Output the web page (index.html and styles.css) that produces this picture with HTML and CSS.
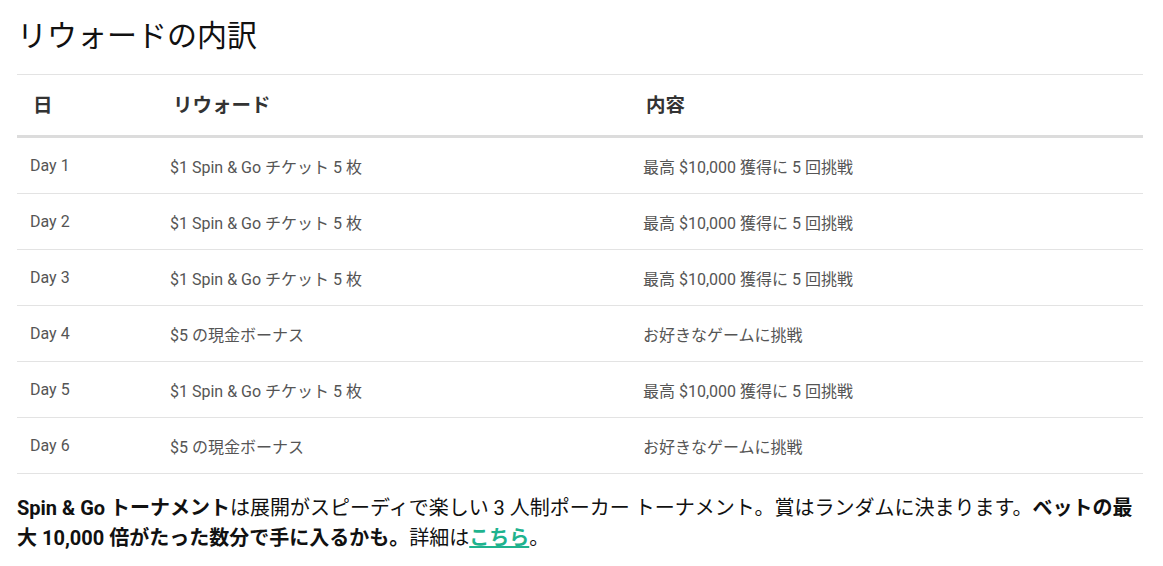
FILE: index.html
```html
<!DOCTYPE html>
<html lang="ja">
<head>
<meta charset="utf-8">
<title>リウォードの内訳</title>
<link rel="stylesheet" href="styles.css">
</head>
<body>
<main class="page">
  <h2 class="title">リウォードの内訳</h2>
  <table class="rewards">
    <colgroup>
      <col class="c-day">
      <col class="c-reward">
      <col class="c-detail">
    </colgroup>
    <thead>
      <tr><th>日</th><th>リウォード</th><th>内容</th></tr>
    </thead>
    <tbody>
      <tr><td>Day 1</td><td>$1 Spin &amp; Go チケット 5 枚</td><td>最高 $10,000 獲得に 5 回挑戦</td></tr>
      <tr><td>Day 2</td><td>$1 Spin &amp; Go チケット 5 枚</td><td>最高 $10,000 獲得に 5 回挑戦</td></tr>
      <tr><td>Day 3</td><td>$1 Spin &amp; Go チケット 5 枚</td><td>最高 $10,000 獲得に 5 回挑戦</td></tr>
      <tr><td>Day 4</td><td>$5 の現金ボーナス</td><td>お好きなゲームに挑戦</td></tr>
      <tr><td>Day 5</td><td>$1 Spin &amp; Go チケット 5 枚</td><td>最高 $10,000 獲得に 5 回挑戦</td></tr>
      <tr><td>Day 6</td><td>$5 の現金ボーナス</td><td>お好きなゲームに挑戦</td></tr>
    </tbody>
  </table>
  <p class="note"><strong>Spin &amp; Go トーナメント</strong>は展開がスピーディで楽しい 3 人制ポーカー トーナメント。賞はランダムに決まります。<strong>ベットの最大 10,000 倍がたった数分で手に入るかも。</strong>詳細は<a href="#" class="link">こちら</a>。</p>
</main>
</body>
</html>
```

FILE: styles.css
```css
html, body {
  margin: 0;
  padding: 0;
  background: #fff;
}
body {
  font-family: "Roboto", "Noto Sans CJK JP", sans-serif;
  color: #222;
}
.page {
  padding: 0 20px 0 17px;
}
.title {
  margin: 0;
  padding-top: 16px;
  height: 74px;
  box-sizing: border-box;
  font-size: 30px;
  line-height: 40px;
  font-weight: 400;
  color: #111;
}
.rewards {
  width: 1126px;
  border-collapse: collapse;
  table-layout: fixed;
}
.c-day { width: 140px; }
.c-reward { width: 473px; }
.c-detail { width: 513px; }
.rewards thead tr {
  border-top: 1px solid #e3e3e3;
  border-bottom: 3px solid #dcdcdc;
}
.rewards th {
  text-align: left;
  height: 62px;
  padding: 0 16px 4px;
  box-sizing: border-box;
  font-size: 19.5px;
  font-weight: 700;
  color: #333;
  vertical-align: middle;
}
.rewards td {
  height: 55px;
  padding: 0 13px;
  font-size: 16px;
  color: #555;
  vertical-align: middle;
  border-bottom: 1px solid #e3e3e3;
}
.note {
  margin: 19px 0 0;
  font-size: 20px;
  line-height: 30px;
  color: #111;
}
.note strong {
  font-weight: 700;
}
.link {
  color: #1fb38e;
  font-weight: 700;
  text-decoration: underline;
}
```
